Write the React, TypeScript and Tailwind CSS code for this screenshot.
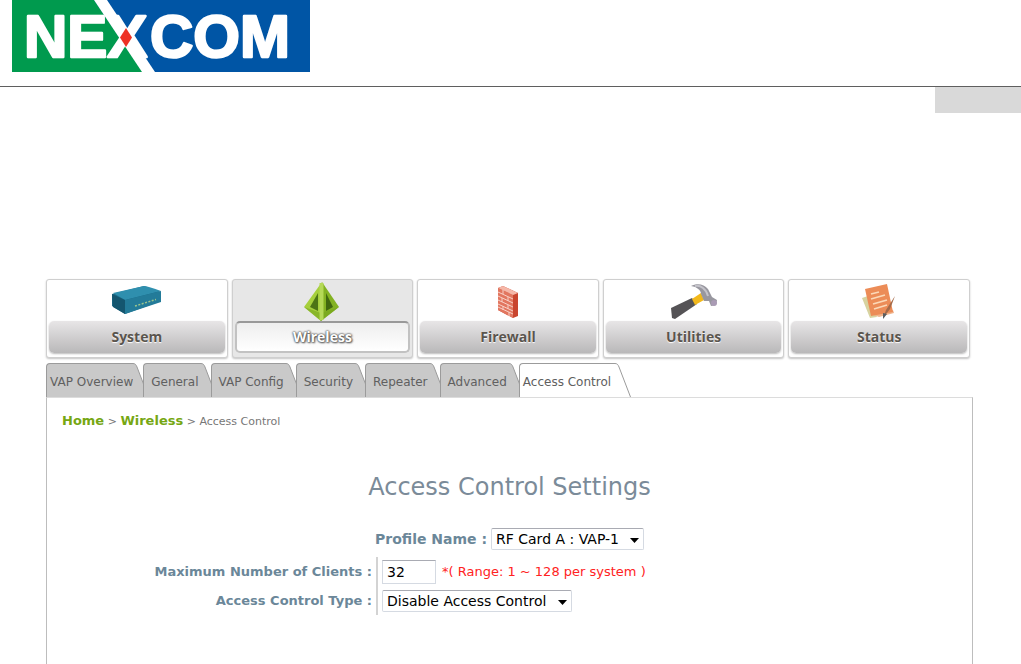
import type { ReactNode } from "react";
import clsx from "clsx";

function Logo() {
  return (
    <svg className="block" width="298" height="72" viewBox="12 0 298 72" role="img" aria-label="Nexcom">
      <rect x="12" width="298" height="72" fill="#0055a5" />
      <path d="M12 0H94L143 72H12Z" fill="#009a4e" />
      <path d="M94 0H107L155 72H142Z" fill="#fff" />
      <g
        fill="#fff"
        stroke="#fff"
        strokeWidth="2.4"
        strokeLinejoin="round"
        fontFamily="'Liberation Sans', Arial, sans-serif"
        fontWeight="700"
        fontSize="60"
      >
        <text x="24" y="57">NEX</text>
        <text x="150" y="57">COM</text>
      </g>
      <path d="M126 28L132 37.500L126 47L120 37.500Z" fill="#ee3124" />
    </svg>
  );
}

function RouterIcon() {
  return (
    <svg width="52" height="38" viewBox="0 0 52 38" aria-hidden="true">
      <path d="M1 11L33 3L50 9L50 18L14 31L1 23Z" fill="#1c6c8a" />
      <path d="M2 10L33 3Q36 3 50 8L14 17Z" fill="#2f8fae" />
      <path d="M14 17L50 8V19L14 31Z" fill="#237b99" />
      <path d="M1 11L14 17V31L2 24Z" fill="#14566f" />
      <path d="M24 23L45 16.500" stroke="#9cc58d" strokeWidth="1.500" strokeDasharray="2 1.500" />
    </svg>
  );
}

function WirelessIcon() {
  return (
    <svg width="36" height="40" viewBox="0 0 36 40" aria-hidden="true">
      <path d="M18 0L0 25L17 39Z" fill="#a6cf3c" />
      <path d="M18 0L35 25L17 39Z" fill="#83b222" />
      <path d="M0 25L17 31L35 25L17 39Z" fill="#76a51d" opacity=".6" />
      <path d="M14 11V29L6 25Z" fill="#4c7415" />
      <path d="M22 11V29L29 25Z" fill="#41680f" />
      <path d="M17.500 1V38" stroke="#b5d957" strokeWidth="4" />
    </svg>
  );
}

function FirewallIcon() {
  return (
    <svg width="22" height="34" viewBox="0 0 22 34" aria-hidden="true">
      <path d="M1 3L6 1L21 8V31L16 33L1 25Z" fill="#c9452f" />
      <path d="M1 3L16 10V33L1 25Z" fill="#e2765f" />
      <path d="M1 3L6 1L21 8L16 10Z" fill="#f5b7a8" />
      <path
        d="M1 7L16 14M1 11L16 18M1 15L16 22M1 19L16 26M1 22L16 29M6 5V9M11 12V16M5 13V17M11 20V24M6 21V25M12 27V31"
        stroke="#f8d0c6"
        strokeWidth="1"
      />
    </svg>
  );
}

function HammerIcon() {
  return (
    <svg width="48" height="36" viewBox="0 0 48 36" aria-hidden="true">
      <path d="M1 24L22 14L27 20L5 35L2 34Z" fill="#555356" />
      <path d="M22 15L31 9L34 16L25 21Z" fill="#f2b81b" />
      <path d="M21 2C27-1 34 0 38 5L42 13L47 16L46 21L41 22L39 17L34 17L31 10C31 6 27 3 21 2Z" fill="#98979f" />
      <path d="M25 2C31 1 36 5 38 12" stroke="#c4c3ca" strokeWidth="2" fill="none" />
      <circle cx="44" cy="19" r="3" fill="#aa9bb5" />
    </svg>
  );
}

function StatusIcon() {
  return (
    <svg width="36" height="36" viewBox="0 0 36 36" aria-hidden="true">
      <path d="M1 14L7 12L16 33L9 34Z" fill="#d7d3a0" />
      <path d="M10 30L32 26L33 29L18 33Z" fill="#f0b48c" />
      <path d="M4 5L26 0L32 28L10 32Z" fill="#ec8c57" />
      <path d="M10 10L18 8M10 15L24 11M12 20L26 16M13 25L26 21" stroke="#fbd9b8" strokeWidth="1.800" />
      <path d="M34 12L25 26L22 34L29 25Z" fill="#a56b49" />
      <path d="M22 29L22 35L26 30Z" fill="#595d60" />
    </svg>
  );
}

const sections: { label: string; icon: ReactNode }[] = [
  { label: "System", icon: <RouterIcon /> },
  { label: "Wireless", icon: <WirelessIcon /> },
  { label: "Firewall", icon: <FirewallIcon /> },
  { label: "Utilities", icon: <HammerIcon /> },
  { label: "Status", icon: <StatusIcon /> },
];

const tabs = ["VAP Overview", "General", "VAP Config", "Security", "Repeater", "Advanced", "Access Control"];

function SectionLink({ label, icon, active }: { label: string; icon: ReactNode; active: boolean }) {
  return (
    <a
      href="#"
      className={clsx(
        "flex h-[79px] flex-col rounded-[3px] border border-[#cfcfcf] p-0.5 shadow-[0_1px_2px_#c4c4c4]",
        active ? "bg-[#e7e7e7]" : "bg-white",
      )}
    >
      <span className="flex h-[39px] items-center justify-center">{icon}</span>
      <span
        className={clsx(
          "flex h-8 items-center justify-center rounded-[5px] font-['Open_Sans',sans-serif] text-sm font-bold",
          active
            ? "border-2 border-[#c2c2c2] border-t-[#999] bg-linear-to-b from-[#eee] to-white text-white [text-shadow:0_0_2px_#444,0_0_2px_#555,1px_1px_2px_#666]"
            : "bg-linear-to-b from-[#e8e6e7] to-[#b9b8b9] text-[#5a554e] shadow-[0_1px_2px_#bbb] [text-shadow:0_1px_1px_#fff]",
        )}
      >
        {label}
      </span>
    </a>
  );
}

function Tab({ label, first, active }: { label: string; first: boolean; active: boolean }) {
  return (
    <a
      href="#"
      aria-current={active ? "page" : undefined}
      className={clsx("relative -mr-1.5 flex h-[34px] text-xs text-[#606060]", active && "z-10")}
    >
      <span
        className={clsx(
          "flex items-center rounded-tl-[4px] border-t border-l border-[#9b9b9b] pt-0.5",
          active ? "bg-white pr-1 pl-[3px]" : "bg-[#c9c9c9]",
          !active && (first ? "pl-[3px]" : "pr-0.5 pl-[7px]"),
        )}
      >
        {label}
      </span>
      <svg width="16" height="34" viewBox="0 0 16 34" aria-hidden="true">
        <path d="M0 .5C2 .5 3 1.500 4 4L15.500 34H0Z" fill={active ? "#fff" : "#c9c9c9"} />
        <path d="M0 .5C2 .5 3 1.500 4 4L15.500 34" fill="none" stroke="#9b9b9b" />
      </svg>
    </a>
  );
}

function Select({ id, children }: { id: string; children: ReactNode }) {
  return (
    <span className="relative inline-flex">
      <select
        id={id}
        className="h-[22px] appearance-none rounded-[2px] border border-[#d5dae2] border-t-[#a9abb3] bg-white pr-6 pl-1 text-sm text-black"
      >
        {children}
      </select>
      <svg className="pointer-events-none absolute top-2.5 right-1" width="10" height="6" viewBox="0 0 10 6" aria-hidden="true">
        <path d="M0 0H9L4.500 5Z" fill="#000" />
      </svg>
    </span>
  );
}

export default function App() {
  return (
    <div className="flex min-h-screen flex-col bg-white font-['DejaVu_Sans',Verdana,sans-serif]">
      <header className="h-[87px] border-b border-[#5f5f5f] pl-3">
        <Logo />
      </header>
      <div className="h-[26px] w-[86px] self-end bg-[#d9d9d9]" />

      <main className="mt-[166px] mr-12 ml-[46px] flex flex-1 flex-col">
        <nav aria-label="Sections" className="mr-[3px] grid grid-cols-5 gap-1">
          {sections.map((section) => (
            <SectionLink key={section.label} {...section} active={section.label === "Wireless"} />
          ))}
        </nav>

        <nav aria-label="Wireless" className="mt-[5px] flex whitespace-nowrap">
          {tabs.map((tab, i) => (
            <Tab key={tab} label={tab} first={i === 0} active={tab === "Access Control"} />
          ))}
        </nav>

        <section className="flex-1 border-x border-t border-[#bdbdbd] border-t-[#dcdcdc]">
          <p className="mt-[15px] ml-[15px] text-[11px] leading-4 text-[#777]">
            <a href="#" className="text-[13px] font-bold text-[#76a713]">Home</a>
            {" > "}
            <a href="#" className="text-[13px] font-bold text-[#76a713]">Wireless</a>
            {" > Access Control"}
          </p>

          <h1 className="mt-[41px] text-center text-2xl leading-8 text-[#7b8b99]">Access Control Settings</h1>

          <form className="text-[13px] text-[#6b8799]">
            <div className="mt-[25px] flex items-center justify-center gap-1">
              <label htmlFor="profile" className="text-sm font-bold">Profile Name :</label>
              <Select id="profile">
                <option>RF Card A : VAP-1</option>
              </Select>
            </div>

            <div className="mt-[7px] grid grid-cols-[331px_1fr]">
              <div className="flex flex-col items-end border-r-2 border-[#d3d3d3] pr-1">
                <label htmlFor="clients" className="flex h-[29px] items-center font-bold">Maximum Number of Clients :</label>
                <label htmlFor="type" className="flex h-[29px] items-center font-bold">Access Control Type :</label>
              </div>
              <div className="pl-1">
                <div className="flex h-[29px] items-center gap-1.5">
                  <input
                    id="clients"
                    defaultValue="32"
                    className="h-6 w-[54px] border border-[#d5dae2] border-t-[#a9abb3] px-1 text-sm text-black"
                  />
                  <span className="text-[13px] text-[#f22]">*( Range: 1 ~ 128 per system )</span>
                </div>
                <div className="flex h-[29px] items-center">
                  <Select id="type">
                    <option>Disable Access Control</option>
                  </Select>
                </div>
              </div>
            </div>
          </form>
        </section>
      </main>
    </div>
  );
}
